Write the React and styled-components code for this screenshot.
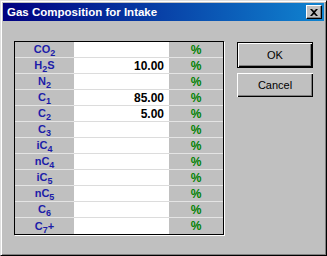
import React from "react";
import styled, { createGlobalStyle } from "styled-components";

const GlobalStyle = createGlobalStyle`
  html, body {
    margin: 0;
    padding: 0;
    background: #c0c0c0;
  }
  body {
    font-family: "Liberation Sans", Arial, sans-serif;
  }
`;

const Window = styled.div`
  width: 327px;
  height: 256px;
  box-sizing: border-box;
  padding: 2px;
  background: #c0c0c0;
  border-top: 1px solid #dfdfdf;
  border-left: 1px solid #dfdfdf;
  border-right: 1px solid #000;
  border-bottom: 1px solid #000;
  box-shadow: inset 1px 1px 0 #fff, inset -1px -1px 0 #808080;
  display: flex;
  flex-direction: column;
`;

const TitleBar = styled.div`
  height: 18px;
  display: flex;
  align-items: center;
  justify-content: space-between;
  padding: 0 2px 0 4px;
  background: linear-gradient(to right, #000080, #1084d0);
`;

const Title = styled.span`
  color: #fff;
  font-size: 11.5px;
  font-weight: bold;
`;

const CloseButton = styled.div`
  width: 16px;
  height: 14px;
  box-sizing: border-box;
  background: #c0c0c0;
  border-top: 1px solid #fff;
  border-left: 1px solid #fff;
  border-right: 1px solid #000;
  border-bottom: 1px solid #000;
  box-shadow: inset -1px -1px 0 #808080;
  display: flex;
  align-items: center;
  justify-content: center;
`;

const Body = styled.div`
  display: flex;
  align-items: flex-start;
  gap: 13px;
  padding: 20px 0 0 11px;
`;

const Grid = styled.div`
  border: 1px solid #000;
  box-shadow: 1px 1px 0 #fff;
  display: flex;
  flex-direction: column;
`;

const Row = styled.div`
  display: grid;
  grid-template-columns: 59px 95px 54px;
  height: 16px;
`;

const Cell = styled.div`
  box-sizing: border-box;
  height: 16px;
  border-bottom: ${(p) => (p.$last ? "none" : "1px solid")};
  display: flex;
  align-items: center;
  font-weight: bold;
`;

const LabelCell = styled(Cell)`
  background: #c0c0c0;
  border-bottom-color: #e4e4e4;
  justify-content: center;
  color: #1c1ca8;
  font-size: 11px;
  line-height: 1;
`;

const ValueCell = styled(Cell)`
  background: #fff;
  border-bottom-color: #dcdcdc;
  justify-content: flex-end;
  padding-right: 5px;
  color: #000;
  font-size: 12px;
`;

const PctCell = styled(Cell)`
  background: #c0c0c0;
  border-bottom-color: #e4e4e4;
  justify-content: center;
  color: #008000;
  font-size: 12px;
`;

const Sub = styled.sub`
  font-size: 9px;
  vertical-align: -3px;
  line-height: 0;
`;

const Buttons = styled.div`
  display: flex;
  flex-direction: column;
  gap: 5px;
  margin-top: 1px;
`;

const Button = styled.button`
  width: 76px;
  height: ${(p) => (p.$default ? "26px" : "24px")};
  box-sizing: border-box;
  margin: 0;
  padding: 0;
  font-family: "Liberation Sans", Arial, sans-serif;
  font-size: 11px;
  color: #000;
  background: #c0c0c0;
  border: ${(p) => (p.$default ? "1px solid #000" : "none")};
  box-shadow: inset 1px 1px 0 #fff, inset -1px -1px 0 #000,
    inset -2px -2px 0 #808080;
`;

const rows = [
  { base: "CO", sub: "2", value: "" },
  { base: "H", sub: "2", tail: "S", value: "10.00" },
  { base: "N", sub: "2", value: "" },
  { base: "C", sub: "1", value: "85.00" },
  { base: "C", sub: "2", value: "5.00" },
  { base: "C", sub: "3", value: "" },
  { base: "iC", sub: "4", value: "" },
  { base: "nC", sub: "4", value: "" },
  { base: "iC", sub: "5", value: "" },
  { base: "nC", sub: "5", value: "" },
  { base: "C", sub: "6", value: "" },
  { base: "C", sub: "7", tail: "+", value: "" },
];

export default function App() {
  return (
    <>
      <GlobalStyle />
      <Window>
        <TitleBar>
          <Title>Gas Composition for Intake</Title>
          <CloseButton>
            <svg width="8" height="7" viewBox="0 0 8 7">
              <path
                d="M0 0h2l2 2 2-2h2L5 3.5 8 7H6L4 5 2 7H0l3-3.5z"
                fill="#000"
              />
            </svg>
          </CloseButton>
        </TitleBar>
        <Body>
          <Grid>
            {rows.map((r, i) => {
              const last = i === rows.length - 1;
              return (
                <Row key={i}>
                  <LabelCell $last={last}>
                    <span>
                      {r.base}
                      <Sub>{r.sub}</Sub>
                      {r.tail}
                    </span>
                  </LabelCell>
                  <ValueCell $last={last}>{r.value}</ValueCell>
                  <PctCell $last={last}>%</PctCell>
                </Row>
              );
            })}
          </Grid>
          <Buttons>
            <Button $default>OK</Button>
            <Button>Cancel</Button>
          </Buttons>
        </Body>
      </Window>
    </>
  );
}
